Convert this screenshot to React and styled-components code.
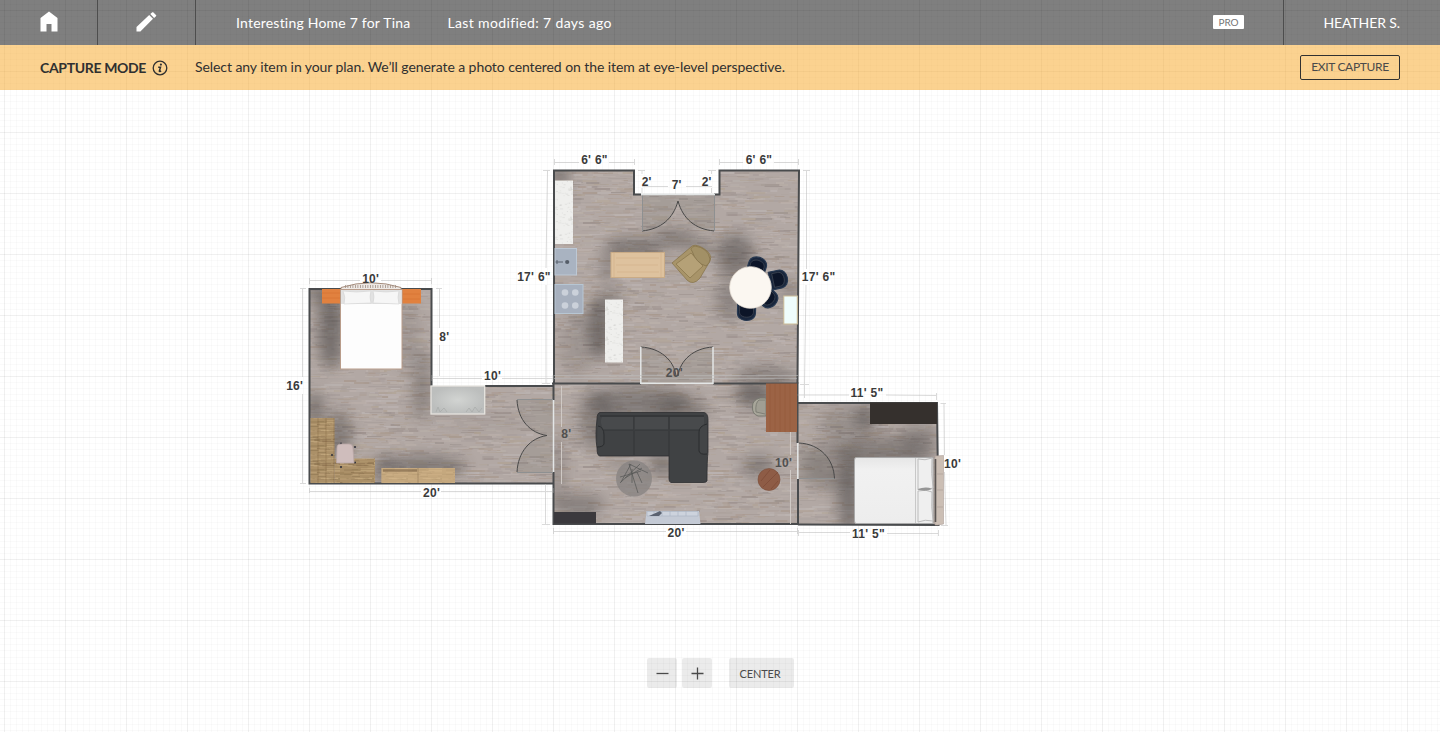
import React from "react";
import styled, { createGlobalStyle } from "styled-components";

const GlobalStyle = createGlobalStyle`
  * { box-sizing: border-box; }
  html, body { margin: 0; padding: 0; background: #fff; overflow: hidden; }
  button { font: inherit; cursor: pointer; }
`;

const sans = `Lato, "Liberation Sans", sans-serif`;

const Page = styled.div`
  position: relative;
  display: flex;
  flex-direction: column;
  height: 732px;
  font-family: ${sans};
  font-size: 14px;
  color: #303030;
`;

const Canvas = styled.svg`
  position: absolute;
  inset: 0;
  width: 1440px;
  height: 732px;
`;

const TopBar = styled.header`
  position: relative;
  display: flex;
  flex: none;
  height: 45px;
  background: rgba(0, 0, 0, 0.5);
  color: #fff;
`;

const NavButton = styled.button`
  display: flex;
  align-items: center;
  justify-content: center;
  width: 98px;
  padding: 0 0 2px;
  border: 0;
  border-right: 1px solid #4d4d4d;
  background: none;
  color: #fff;
`;

const BarText = styled.span`
  display: flex;
  align-items: center;
  margin-left: ${(p) => p.$gap}px;
  letter-spacing: ${(p) => p.$track}px;
  white-space: nowrap;
`;

const ProBadge = styled.span`
  align-self: flex-start;
  width: 31px;
  height: 14px;
  margin: 15px 39px 0 auto;
  border-radius: 1px;
  background: #fff;
  color: #757575;
  font-size: 10px;
  line-height: 15px;
  letter-spacing: -0.1px;
  text-align: center;
`;

const Account = styled.div`
  display: flex;
  align-items: center;
  justify-content: flex-end;
  width: 157px;
  padding: 0 40px 0 0;
  border-left: 1px solid #4d4d4d;
  letter-spacing: -0.1px;
  white-space: nowrap;
`;

const CaptureBar = styled.section`
  position: relative;
  display: flex;
  flex: none;
  align-items: center;
  height: 45px;
  padding: 0 40px;
  background: rgba(247, 165, 33, 0.5);
  white-space: nowrap;
`;

const Mode = styled.strong`
  display: flex;
  align-items: center;
  gap: 6px;
  width: 155px;
  font-weight: 700;
  line-height: 16px;
  letter-spacing: -0.34px;
`;

const Hint = styled.span`
  padding-bottom: 2px;
  letter-spacing: -0.075px;
`;

const ExitButton = styled.button`
  width: 100px;
  height: 25px;
  margin-left: auto;
  padding: 0 0 2px;
  border: 1px solid #303030;
  border-radius: 2px;
  background: none;
  color: #4a4a4a;
  font-size: 12px;
  line-height: 21px;
  letter-spacing: -0.32px;
`;

const Controls = styled.div`
  position: relative;
  display: flex;
  justify-content: center;
  gap: 5px;
  margin: auto 0 44px;
`;

const ControlButton = styled.button`
  display: flex;
  align-items: center;
  justify-content: center;
  width: ${(p) => (p.$wide ? 65 : 30)}px;
  height: 30px;
  margin-left: ${(p) => (p.$wide ? 12 : 0)}px;
  padding: ${(p) => (p.$wide ? "0 2px 0 0" : "1px 0 0 1px")};
  border: 0;
  border-radius: 2px;
  background: rgba(0, 0, 0, 0.08);
  color: #4a4a4a;
  font-size: 11px;
  letter-spacing: -0.15px;
`;

const DimText = styled.text`
  font: bold 12px "Liberation Sans", Arial, sans-serif;
  letter-spacing: 0.3px;
  text-anchor: middle;
  fill: ${(p) => (p.$soft ? "#505050" : "#3a3a3a")};
`;

/* Deterministic noise so the planks look the same on every load. */
function makeRandom(seed) {
  let s = seed;
  return () => {
    s = (s * 16807) % 2147483647;
    return s / 2147483647;
  };
}

const TILE_W = 244;
const TILE_H = 122;
const tones = ["#bcb1ac", "#ada29c", "#bab0aa", "#9c918d", "#b0a294", "#a89e9b", "#bcb4b2", "#a9998e"];
const planks = (() => {
  const r = makeRandom(4127);
  const out = [];
  for (let y = 0; y < TILE_H; y += 2) {
    for (let i = 0; i < 22; i++) {
      const w = 5 + r() * 15;
      const x = r() * TILE_W;
      const plank = { x, y, w, h: r() > 0.4 ? 2 : 1, c: tones[Math.floor(r() * tones.length)], o: 0.25 + r() * 0.55 };
      out.push(plank);
      if (x + w > TILE_W) out.push({ ...plank, x: x - TILE_W });
    }
  }
  return out;
})();

const speckles = (() => {
  const r = makeRandom(733);
  return Array.from({ length: 45 }, () => ({ x: r() * 18, y: r() * 30, w: 1 + r() * 2.5, o: 0.15 + r() * 0.35 }));
})();

const grains = (() => {
  const r = makeRandom(97);
  return Array.from({ length: 60 }, () => ({ x: r() * 38 - 5, y: r() * 24, w: 5 + r() * 14, c: r() > 0.5 ? "#7d6543" : "#d2b78a", o: 0.2 + r() * 0.35 }));
})();

const rooms = {
  bedroom: "309.5,289 431.5,289 431.5,386 553,386 553,483.5 309.5,483.5",
  kitchen: "554,170.5 634,170.5 634,194.5 719.5,194.5 719.5,170.5 799,170.5 797.5,383.5 553.5,383.5",
  living: "553.5,383.5 797.5,383.5 798,524 553.5,524",
  guest: "798,403 937,403 938.5,525 798,524.5",
};

const shadows = {
  bedroom: [[331, 328, 13, 42, 0.5], [318, 294, 13, 9, 0.4], [422, 385, 10, 36, 0.3], [315, 410, 9, 20, 0.42], [339, 436, 13, 26, 0.38], [424, 467, 42, 12, 0.4], [384, 470, 10, 14, 0.4], [480, 422, 50, 8, 0.08], [407, 335, 12, 35, 0.15]],
  kitchen: [[559, 177, 9, 8, 0.6], [634, 248, 30, 10, 0.45], [674, 238, 20, 11, 0.35], [608, 269, 9, 14, 0.3], [600, 328, 13, 32, 0.5], [612, 298, 11, 9, 0.3], [735, 255, 19, 21, 0.45], [730, 300, 15, 20, 0.3], [766, 378, 32, 13, 0.3], [577, 346, 16, 34, 0.15], [789, 292, 9, 13, 0.25], [700, 247, 12, 10, 0.3]],
  living: [[640, 403, 50, 17, 0.4], [596, 420, 18, 30, 0.32], [683, 410, 26, 14, 0.3], [755, 394, 20, 12, 0.55], [758, 466, 16, 12, 0.35], [578, 505, 26, 12, 0.35], [662, 464, 14, 12, 0.4], [620, 463, 13, 7, 0.2], [557, 470, 8, 38, 0.2]],
  guest: [[866, 417, 11, 12, 0.45], [849, 499, 11, 36, 0.48], [885, 453, 48, 17, 0.38], [831, 468, 28, 24, 0.26], [920, 437, 19, 12, 0.3], [845, 425, 26, 20, 0.2]],
};

function Rooms() {
  return Object.entries(rooms).map(([name, points]) => (
    <g key={name}>
      <clipPath id={`clip-${name}`}><polygon points={points} /></clipPath>
      <polygon points={points} fill="url(#floor)" />
      <g clipPath={`url(#clip-${name})`}>
        {shadows[name].map(([x, y, rx, ry, o], i) => (
          <ellipse key={i} cx={x} cy={y} rx={rx} ry={ry} fill="#3b3938" opacity={o} filter="url(#soft)" />
        ))}
      </g>
    </g>
  ));
}

function Walls() {
  return (
    <g fill="none" stroke="#494b4d" strokeWidth="2">
      <path d="M553 386H485M431.5 386V289H309.5V483.5H553" />
      <path d="M641 194.5H634V170.5H554V383.5M714 194.5H719.5V170.5H799L797.5 383.5" />
      <path d="M552 383.5H641M713 383.5H797.5V443M553.5 383.5V400M553.5 472V524H798V479" />
      <path d="M798 403H937L938.5 525L798 524.5" />
    </g>
  );
}

function Doors() {
  return (
    <g fill="none" strokeWidth="1">
      <g fill="#5d5956" fillOpacity=".14" stroke="none">
        <path d="M642 195H714V231C695 229 683 219 678 201C673 219 661 229 642 231Z" />
        <path d="M641 383V347C660 348 674 360 676 378C680 360 694 348 713 347V383Z" />
        <path d="M553 400H517C518 420 530 433 547 435.5C530 438 518 452 517 472H553Z" />
        <path d="M799 443C820 444 834 459 834.5 479H799Z" />
      </g>
      <g stroke="#484848">
        <path d="M642 231C661 229 673 219 678 201C683 219 695 229 714 231" />
        <path d="M641 347C660 348 674 360 676 376M713 347C694 348 680 360 678 376" />
        <path d="M517 400C518 420 530 433 547 435.5C530 438 518 452 517 472" />
        <path d="M799 443C820 444 834 459 834.5 479" />
      </g>
      <g stroke="#8e9091">
        <path d="M642.5 195V231M714.5 195V231M517 399.5H553M517 472.5H553M799 478.5H834.5" />
      </g>
      <g stroke="#e3e6e6" strokeWidth="1.5">
        <path d="M640.8 347V383.2H713V347M553.5 400V472M797.8 443V479M641 194.5H715" />
      </g>
    </g>
  );
}

function Bedroom() {
  return (
    <g>
      <rect x="322" y="289" width="19" height="14.5" fill="#e1813f" />
      <rect x="402" y="289" width="19" height="14.5" fill="#e1813f" />
      <path d="M322 293h18M322 298h18M403 294h17M403 299h17" stroke="#cf6b2b" strokeWidth=".8" opacity=".6" />
      <path d="M341 287.5Q371 278 401 287.5V290H341Z" fill="#eee9e5" stroke="#a48b7b" />
      <path d="M345 286.5H397" stroke="#a09085" strokeWidth="3" strokeDasharray=".8 1.7" />
      <rect x="340.5" y="289.5" width="61.5" height="79.5" fill="#fdfdfd" stroke="#b89c8a" />
      <rect x="341" y="290" width="60.5" height="14" fill="#e2e2e2" />
      <path d="M343 291Q356 293 371 291Q369 297 371 303L344 304Q346 297 343 291ZM373 291Q386 293 399 291Q397 297 399 304L373 303Q375 297 373 291Z" fill="#f6f6f6" stroke="#d4d4d4" strokeWidth=".6" />
      <rect x="431" y="386" width="53.7" height="28" fill="url(#glass)" stroke="#e6e4df" strokeWidth="1.3" />
      <path d="M436 412l2-5 2 5 4-4 3 4M466 412l3-4 3 4 3-5 4 5 3-4" fill="none" stroke="#a8aaa9" strokeWidth=".7" />
      <rect x="310.5" y="418" width="24" height="65" fill="url(#oldwood)" />
      <rect x="334.5" y="458.5" width="40.5" height="24.5" fill="url(#oldwood)" />
      <path d="M334 418V483M334.5 473H375M318 418V483M326 418V483" stroke="#725833" strokeWidth=".7" opacity=".45" />
      <rect x="381.5" y="468" width="73.5" height="15" fill="#deBF94" />
      <rect x="381.5" y="468" width="73.5" height="15" fill="url(#oldwood)" opacity=".5" />
      <path d="M383 470.5h34" stroke="#786044" strokeWidth="2.5" opacity=".6" />
      <path d="M418 468v15" stroke="#786044" strokeWidth="1" opacity=".4" />
      <g fill="#34343c"><circle cx="341" cy="443.5" r="1.1" /><circle cx="355" cy="447" r="1.1" /><circle cx="332" cy="455" r="1.1" /><circle cx="355" cy="462.5" r="1.1" /><circle cx="341" cy="467" r="1.1" /></g>
      <path d="M337 447Q337 444 342 444H349Q353 444 353 449L354 463H336.5Z" fill="#cfbdbc" stroke="#b9a7a6" strokeWidth=".8" />
    </g>
  );
}

function DiningChair({ x, y, angle }) {
  return (
    <g transform={`translate(${x} ${y}) rotate(${angle})`}>
      <path d="M-9 8V-2C-9-12 9-12 9-2V8Z" fill="#19263c" stroke="#273951" strokeWidth="1.2" />
      <path d="M-7 5V-1C-7-8 7-8 7-1V5Z" fill="#0c1528" stroke="#3b4350" strokeWidth=".8" />
    </g>
  );
}

function Kitchen() {
  return (
    <g>
      <rect x="555" y="180.5" width="18" height="63.5" fill="url(#marble)" />
      <rect x="605" y="299.5" width="18" height="63" fill="url(#marble)" />
      <rect x="555" y="248.5" width="21.5" height="26.5" fill="#a9b3c1" stroke="#bdc8d4" />
      <path d="M555.5 262H563M557 260V264" stroke="#59616d" /><circle cx="567.2" cy="262" r="2.1" fill="#555d68" />
      <rect x="555" y="284.5" width="28" height="29" fill="#a7b0be" stroke="#b7c6d3" />
      <g fill="#cbd1da"><circle cx="565" cy="292.5" r="3.3" /><circle cx="575.3" cy="292.5" r="3.3" /><circle cx="565" cy="305.5" r="3.3" /><circle cx="575.3" cy="305.5" r="3.3" /></g>
      <rect x="611" y="252.5" width="53.5" height="25" fill="#dec29e" stroke="#c9ab86" />
      <path d="M614 253V277M661 253V277M616 258H659M616 265H658M617 272H659" stroke="#cba67d" strokeWidth=".7" opacity=".6" />
      <path d="M672 263L691 247Q694 243 703 248Q713 254 710 261L700 278Q693 286 687 280Z" fill="#a89469" stroke="#89764e" strokeWidth=".8" />
      <path d="M676 264L691 253L703 266L690 278Z" fill="#b5a177" stroke="#8c784f" strokeWidth=".8" />
      <path d="M692 251Q689 248 695 246Q708 248 710 259Q710 263 706 266Q696 263 692 251Z" fill="#a29066" stroke="#85734c" strokeWidth=".8" />
      <DiningChair x={757} y={266.5} angle={17} />
      <DiningChair x={778} y={279.5} angle={78} />
      <DiningChair x={768} y={298} angle={135} />
      <DiningChair x={746.5} y={311} angle={182} />
      <circle cx="750.5" cy="287.5" r="20.8" fill="#fbf7f1" stroke="#e7dfd5" strokeWidth=".8" />
      <rect x="783.8" y="296" width="13.5" height="28" fill="#effdfc" stroke="#cdbd98" />
    </g>
  );
}

function Living() {
  return (
    <g>
      <path d="M600 412.5H704Q708 413 708 420V452Q707 460 707 481Q706 482.5 703 482.5H671Q669 482 669 479V456H600Q597 456 597 448Q595 436 597 419Q597 413 600 412.5Z" fill="#404244" stroke="#2d2f31" strokeWidth=".8" />
      <path d="M600 416H704" stroke="#2b2d2f" strokeWidth="1.2" />
      <path d="M602 417H633V430H604Q599 423 602 417ZM634 417H668V430H634ZM670 417H704V430H670Z" fill="#484a4c" />
      <path d="M634 416V455M669 416V456M604 430H633M635 430H668M670 430H700" fill="none" stroke="#323436" strokeWidth=".9" />
      <path d="M598 426Q604 427 604 435V444Q603 447 597 447M707 424Q699 426 699 432V451Q700 455 707 454" fill="#434547" stroke="#2b2d2f" />
      <circle cx="634" cy="478.5" r="18" fill="#858280" opacity=".75" />
      <path d="M629 464L638 493M631 464L621 482M629 464L648 473M640 464L620 483M637 472L642 483M620 477L641 471M632 469V483M625 478L642 468" fill="none" stroke="#555655" strokeWidth=".7" />
      <rect x="554" y="512" width="42" height="11.5" fill="#3b393d" />
      <path d="M646.5 511H699L700.5 524H645Z" fill="#c4cad5" />
      <path d="M647 511.5H698V516H647ZM654 511V516M662 511V516M670 511V516M678 511V516M686 511V516" fill="#cdd3dd" stroke="#adb6c3" strokeWidth=".7" />
      <path d="M649 516L660 511L662 513L659 516Z" fill="#5b6270" />
      <path d="M766 398H760Q752 400 752.5 407Q752 414 758 416H766Z" fill="#a8a69a" stroke="#787870" />
      <path d="M765 400H759Q755 403 756 412L765 414" fill="#a09e93" stroke="#76766d" strokeWidth=".8" />
      <rect x="766" y="383.5" width="31" height="48.5" fill="#9c6345" />
      <path d="M770 384V432M775 384V432M780 384V432M785 384V432M790 384V432" stroke="#884b2f" strokeWidth=".8" opacity=".35" />
      <circle cx="769" cy="479.5" r="11" fill="#8e5c46" stroke="#7b4d39" strokeWidth=".6" />
      <path d="M761 481L770 470M763 487L778 472M771 489L778 481" stroke="#784632" strokeWidth=".8" opacity=".7" />
    </g>
  );
}

function Guest() {
  return (
    <g>
      <rect x="870" y="402.5" width="67" height="21.5" fill="#35302d" />
      <path d="M935 456L943.5 455.5V524L938 525H935Z" fill="#cbbeb4" stroke="#aca098" strokeWidth=".6" />
      <path d="M937 474h6M937 490h6M937 507h6" stroke="#aea299" strokeWidth=".7" />
      <path d="M935.5 459V522" stroke="#595452" strokeWidth="1.6" />
      <path d="M856 457.5H933V523.5H856Q854.5 523.5 854.5 521V460Q854.5 457.5 856 457.5Z" fill="url(#cover)" stroke="#a9a9a9" />
      <path d="M915.5 458V523" stroke="#c8c8c8" />
      <path d="M918 459Q925 461 932 458Q931 474 933 488Q926 491 918 489ZM918 491Q926 489 932 492Q931 507 933 521Q925 519 918 522Z" fill="#efefef" stroke="#bcbcbc" />
      <path d="M917 489.5Q926 486 932 489Q926 492 917 489.5Z" fill="#969696" />
    </g>
  );
}

const dimensionLines = [
  "M554.5 159V165M554.5 162.5H579M609 162.5H634M634.5 159V165",
  "M719.5 159V165M719.5 162.5H743M774 162.5H798.5M798.5 159V165",
  "M543 170.5H550M547.5 171L546 268M546 285V383M542 383.5H550",
  "M803 170.5H810M806.5 171V269M806 285L804.5 384M800 384.5H809",
  "M638 170.5H645M642 171V174M642 188V193M708 170.5H716M711.5 171V174M711.5 188V193M642 186.5H668M686 186.5H712",
  "M309.5 278V284M309.5 280.5H360M381 280.5H431.5M431.5 278V284",
  "M300 288.5H306M302.5 289V377M302.5 394V483.5M300 483.5H306",
  "M436 288.5H442M439.5 289V328M439.5 345V376",
  "M432 378.5H482M502 378.5H553M432 375V381M553 375V381",
  "M309.5 488V493M309.5 491.5H421M441 491.5H552M553 488V493",
  "M545.5 484V524M542 524.5H550",
  "M553.5 528V534M553.5 531.5H666M686 531.5H797.5M797.5 528V534",
  "M804.5 384V398M797.5 395H849M886 395L936.5 395.5M936.5 393V400",
  "M940.5 403.5H946M944 404L944.5 455M944.5 472L946 525M941 525.5H948",
  "M798.5 530V536M798.5 532.5H850M887 533.5H938.5M938.5 530V536",
  "M554 375.5H665M684 375.5H798M554 378.5H797",
];

const labels = [
  [594.5, 164, "6' 6\""], [759, 164, "6' 6\""], [646.7, 185.5, "2'"], [676.7, 188.5, "7'"], [706.7, 185.5, "2'"],
  [534, 280.5, "17' 6\""], [818.7, 280.5, "17' 6\""], [370.7, 282.5, "10'"], [444.3, 340.5, "8'"],
  [294.7, 389.5, "16'"], [492.5, 380.2, "10'"], [431.5, 496.5, "20'"], [566.3, 437.5, "8'", true],
  [674.3, 377.2, "20'", true], [783.5, 466.5, "10'", true], [676, 537, "20'"],
  [867, 396.5, "11' 5\""], [868.5, 537.5, "11' 5\""], [952.5, 467.7, "10'"],
];

function FloorPlan() {
  return (
    <Canvas viewBox="0 0 1440 732" aria-label="Floor plan">
      <defs>
        <filter id="soft" x="-100%" y="-100%" width="300%" height="300%"><feGaussianBlur stdDeviation="7" /></filter>
        <pattern id="floor" width={TILE_W} height={TILE_H} patternUnits="userSpaceOnUse">
          <rect width={TILE_W} height={TILE_H} fill="#b2a8a4" />
          {planks.map((p, i) => <rect key={i} x={p.x} y={p.y} width={p.w} height={p.h} fill={p.c} opacity={p.o} />)}
        </pattern>
        <pattern id="marble" width="18" height="30" patternUnits="userSpaceOnUse">
          <rect width="18" height="30" fill="#efefed" />
          {speckles.map((p, i) => <rect key={i} x={p.x} y={p.y} width={p.w} height="1" fill="#c9c9c6" opacity={p.o} />)}
        </pattern>
        <pattern id="oldwood" width="34" height="24" patternUnits="userSpaceOnUse">
          <rect width="34" height="24" fill="#ab9068" />
          {grains.map((p, i) => <rect key={i} x={p.x} y={p.y} width={p.w} height="1" fill={p.c} opacity={p.o} />)}
        </pattern>
        <radialGradient id="glass"><stop stopColor="#d2d4d2" /><stop offset="1" stopColor="#bcbebd" /></radialGradient>
        <linearGradient id="cover" x2="0" y2="1"><stop stopColor="#e6e6e6" /><stop offset=".2" stopColor="#f1f1f1" /><stop offset="1" stopColor="#ededed" /></linearGradient>
      </defs>
      <Rooms />
      <Walls />
      <Doors />
      <Bedroom />
      <Kitchen />
      <Living />
      <Guest />
      <g fill="none" stroke="#bcbcbc" strokeWidth="1" opacity=".55">
        {dimensionLines.map((d) => <path key={d} d={d} />)}
      </g>
      <path d="M561.5 386V427M561.5 442V484M790.5 432V455M790.5 470V524" stroke="#cfc9c5" />
      {labels.map(([x, y, text, soft], i) => <DimText key={i} x={x} y={y} $soft={soft}>{text}</DimText>)}
    </Canvas>
  );
}

function GridLines() {
  return (
    <Canvas viewBox="0 0 1440 732" aria-hidden="true">
      <defs>
        <pattern id="minor" x="4" y="10" width="61" height="61" patternUnits="userSpaceOnUse">
          {[6, 12, 18, 24, 30, 37, 43, 49, 55].map((n) => (
            <path key={n} d={`M0 ${n}.5H61M${n}.5 0V61`} stroke="#000" strokeOpacity=".02" />
          ))}
        </pattern>
        <pattern id="major" x="4" y="10" width="61" height="61" patternUnits="userSpaceOnUse">
          <path d="M0 .5H61M.5 0V61" stroke="#000" strokeOpacity=".06" />
        </pattern>
      </defs>
      <rect width="1440" height="732" fill="url(#minor)" />
      <rect width="1440" height="732" fill="url(#major)" />
    </Canvas>
  );
}

function HomeIcon() {
  return <svg width="18" height="21" viewBox="0 0 18 21"><path d="M9 .5L17.5 7V20.5H11.5V13H6.5V20.5H.5V7Z" fill="currentColor" /></svg>;
}

function PencilIcon() {
  return <svg width="21" height="20" viewBox="0 0 21 20"><path d="M.5 15L13.2 3L17 6.8L4.4 19.5H.5ZM14.3 2L16.3.3Q17 0 17.5.5L20.2 3.2Q20.5 3.8 20 4.2L18.1 5.9Z" fill="currentColor" /></svg>;
}

function InfoIcon() {
  return (
    <svg width="16" height="16" viewBox="0 0 16 16" fill="none" stroke="currentColor">
      <circle cx="8" cy="8" r="6.8" strokeWidth="1.3" />
      <circle cx="8.9" cy="4.6" r="1.1" fill="currentColor" stroke="none" />
      <path d="M6.2 7.2H8.5L7.3 11.2Q7.6 11.9 9.1 10.8" strokeWidth="1.5" />
    </svg>
  );
}

export default function App() {
  return (
    <Page>
      <GlobalStyle />
      <GridLines />
      <FloorPlan />
      <TopBar>
        <NavButton aria-label="Home"><HomeIcon /></NavButton>
        <NavButton aria-label="Edit"><PencilIcon /></NavButton>
        <BarText $gap={40} $track={0.21}>Interesting Home 7 for Tina</BarText>
        <BarText $gap={37} $track={0.37}>Last modified: 7 days ago</BarText>
        <ProBadge>PRO</ProBadge>
        <Account>HEATHER S.</Account>
      </TopBar>
      <CaptureBar>
        <Mode>CAPTURE MODE <InfoIcon /></Mode>
        <Hint>Select any item in your plan. We’ll generate a photo centered on the item at eye-level perspective.</Hint>
        <ExitButton>EXIT CAPTURE</ExitButton>
      </CaptureBar>
      <Controls>
        <ControlButton aria-label="Zoom out"><svg width="13" height="13" stroke="currentColor" strokeWidth="1.3"><path d="M.5 6.5H12.5" /></svg></ControlButton>
        <ControlButton aria-label="Zoom in"><svg width="13" height="13" stroke="currentColor" strokeWidth="1.3"><path d="M.5 6.5H12.5M6.5.5V12.5" /></svg></ControlButton>
        <ControlButton $wide>CENTER</ControlButton>
      </Controls>
    </Page>
  );
}
